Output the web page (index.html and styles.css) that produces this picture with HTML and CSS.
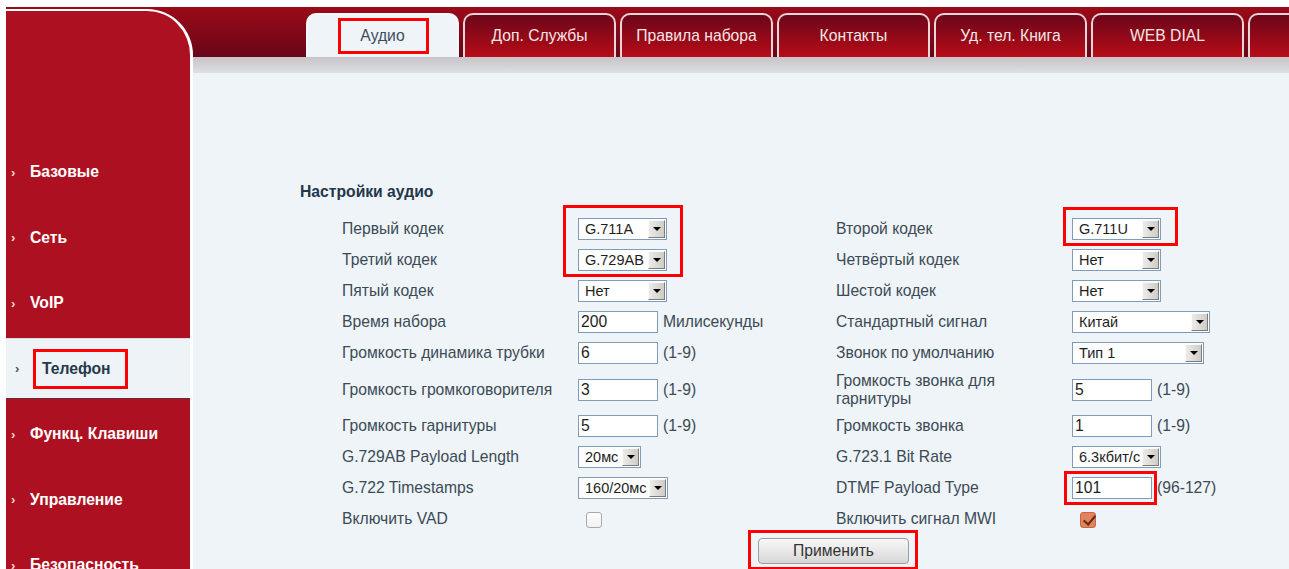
FILE: index.html
```html
<!DOCTYPE html>
<html lang="ru">
<head>
<meta charset="utf-8">
<title>Телефон — Аудио</title>
<link rel="stylesheet" href="styles.css">
</head>
<body>
<div class="app">
  <nav class="side">
    <a class="item"><span class="chev">›</span><span class="txt">Базовые</span></a>
    <a class="item"><span class="chev">›</span><span class="txt">Сеть</span></a>
    <a class="item"><span class="chev">›</span><span class="txt">VoIP</span></a>
    <a class="item active"><span class="chev">›</span><span class="txt">Телефон<span class="mark m-side"></span></span></a>
    <a class="item"><span class="chev">›</span><span class="txt">Функц. Клавиши</span></a>
    <a class="item"><span class="chev">›</span><span class="txt">Управление</span></a>
    <a class="item"><span class="chev">›</span><span class="txt">Безопасность</span></a>
  </nav>

  <main class="main">
    <div class="tabs">
      <a class="tab active"><span class="txt">Аудио<span class="mark m-tab"></span></span></a>
      <a class="tab">Доп. Службы</a>
      <a class="tab">Правила набора</a>
      <a class="tab">Контакты</a>
      <a class="tab">Уд. тел. Книга</a>
      <a class="tab">WEB DIAL</a>
      <a class="tab">Wi-Fi</a>
    </div>
    <div class="strip"></div>

    <section class="content">
      <h2 class="title">Настройки аудио</h2>
      <table class="form">
        <colgroup><col class="c-lbl"><col class="c-ctl"><col class="c-lbl"><col></colgroup>
        <tr>
          <td class="lbl">Первый кодек</td>
          <td><span class="sel w89"><select><option>G.711A</option><option>G.711U</option><option>G.722</option></select><span class="mark m-pair"></span></span></td>
          <td class="lbl">Второй кодек</td>
          <td><span class="sel w89"><select><option>G.711U</option><option>G.711A</option><option>G.722</option></select><span class="mark m-second"></span></span></td>
        </tr>
        <tr>
          <td class="lbl">Третий кодек</td>
          <td><span class="sel w89"><select><option>G.729AB</option><option>G.723.1</option></select></span></td>
          <td class="lbl">Четвёртый кодек</td>
          <td><span class="sel w89"><select><option>Нет</option><option>G.722</option></select></span></td>
        </tr>
        <tr>
          <td class="lbl">Пятый кодек</td>
          <td><span class="sel w89"><select><option>Нет</option><option>G.726-32</option></select></span></td>
          <td class="lbl">Шестой кодек</td>
          <td><span class="sel w89"><select><option>Нет</option><option>iLBC</option></select></span></td>
        </tr>
        <tr>
          <td class="lbl">Время набора</td>
          <td><input class="inp" type="text" value="200"><span class="unit">Милисекунды</span></td>
          <td class="lbl">Стандартный сигнал</td>
          <td><span class="sel w138"><select><option>Китай</option><option>Россия</option></select></span></td>
        </tr>
        <tr>
          <td class="lbl">Громкость динамика трубки</td>
          <td><input class="inp" type="text" value="6"><span class="unit">(1-9)</span></td>
          <td class="lbl">Звонок по умолчанию</td>
          <td><span class="sel w132"><select><option>Тип 1</option><option>Тип 2</option></select></span></td>
        </tr>
        <tr class="tall">
          <td class="lbl">Громкость громкоговорителя</td>
          <td><input class="inp" type="text" value="3"><span class="unit">(1-9)</span></td>
          <td class="lbl wrap">Громкость звонка для гарнитуры</td>
          <td><input class="inp" type="text" value="5"><span class="unit">(1-9)</span></td>
        </tr>
        <tr>
          <td class="lbl">Громкость гарнитуры</td>
          <td><input class="inp" type="text" value="5"><span class="unit">(1-9)</span></td>
          <td class="lbl">Громкость звонка</td>
          <td><input class="inp" type="text" value="1"><span class="unit">(1-9)</span></td>
        </tr>
        <tr>
          <td class="lbl">G.729AB Payload Length</td>
          <td><span class="sel w63"><select><option>20мс</option><option>30мс</option></select></span></td>
          <td class="lbl">G.723.1 Bit Rate</td>
          <td><span class="sel w89"><select><option>6.3кбит/с</option><option>5.3кбит/с</option></select></span></td>
        </tr>
        <tr>
          <td class="lbl">G.722 Timestamps</td>
          <td><span class="sel w90"><select><option>160/20мс</option><option>320/20мс</option></select></span></td>
          <td class="lbl">DTMF Payload Type</td>
          <td><span class="hold"><input class="inp" type="text" value="101"><span class="mark m-dtmf"></span></span><span class="unit">(96-127)</span></td>
        </tr>
        <tr>
          <td class="lbl">Включить VAD</td>
          <td><input class="cb" type="checkbox"></td>
          <td class="lbl">Включить сигнал MWI</td>
          <td><input class="cb" type="checkbox" checked></td>
        </tr>
        <tr class="actions">
          <td colspan="4"><span class="hold"><button class="apply" type="button">Применить</button><span class="mark m-apply"></span></span></td>
        </tr>
      </table>
    </section>
  </main>
</div>
</body>
</html>
```

FILE: styles.css
```css
* { box-sizing: border-box; }

html, body { margin: 0; }

body {
  background: #fff;
  padding: 7px 0 0 6px;
  height: 569px;
  overflow: hidden;
  font-family: "Liberation Sans", Arial, sans-serif;
  font-size: 15.7px;
  color: #3c4a56;
}

a { text-decoration: none; cursor: pointer; }

/* frame: dark red header band across the top, light panel below */
.app {
  display: flex;
  height: 562px;
  background:
    linear-gradient(#9b0a18, #680618) 0 0 / 100% 50px no-repeat,
    #eef4f7;
}

/* ---------- left menu ---------- */
.side {
  width: 187px;
  flex: none;
  margin-top: 2px;
  padding-top: 130.5px;
  display: flex;
  flex-direction: column;
  gap: 4.5px;
  background: #ad1121;
  border-top: 2px solid #fff;
  border-right: 3px solid #fff;
  border-top-right-radius: 46px;
}

.item {
  height: 61px;
  flex: none;
  display: flex;
  align-items: center;
  padding-left: 5px;
  color: #fff;
  font-weight: bold;
}

.item .chev {
  width: 19px;
  font-size: 13px;
  color: #f3dada;
}

.item .txt { position: relative; }

.item.active {
  padding-left: 9px;
  background: #edf3f7;
  color: #27394b;
  border-top: 1px solid #d9dcdf;
  border-bottom: 1px solid #6b2a33;
}

.item.active .chev {
  width: 27px;
  color: #4a5560;
}

/* ---------- tabs ---------- */
.main {
  flex: 1;
  min-width: 0;
  display: flex;
  flex-direction: column;
}

.tabs {
  height: 50px;
  flex: none;
  display: flex;
  gap: 4px;
  padding: 6px 0 0 113px;
  overflow: hidden;
}

.tab {
  width: 153px;
  height: 44px;
  flex: none;
  display: flex;
  align-items: center;
  justify-content: center;
  border: 2px solid #ecd5d8;
  border-bottom: 0;
  border-radius: 10px 10px 0 0;
  background: linear-gradient(#6b0619, #b70c18);
  color: #f6e6e6;
}

.tab.active {
  background: #eef4f7;
  border-color: #f4f7f9;
  color: #3b4d60;
}

.tab .txt { position: relative; }

.strip {
  height: 16px;
  flex: none;
  background: linear-gradient(#c8c3c7, #dde0e2);
}

/* ---------- form ---------- */
.content { padding: 110px 0 0 107px; }

.title {
  margin: 0;
  font-size: 15.7px;
  line-height: 18px;
  font-weight: bold;
  color: #23364a;
}

.form {
  margin: 12.5px 0 0 42px;
  width: 947px;
  table-layout: fixed;
  border-collapse: collapse;
}

.c-lbl { width: 236px; }
.c-ctl { width: 258px; }

.form td {
  height: 31px;
  padding: 0;
  vertical-align: middle;
  line-height: 18px;
  white-space: nowrap;
}

.form td.wrap { white-space: normal; padding-right: 40px; }

.form tr.tall td { height: 42px; }

/* drop-down with a raised arrow button */
.sel {
  position: relative;
  display: inline-block;
  vertical-align: middle;
  height: 22px;
  border: 1px solid #7f9db9;
  background: #fff;
}

.sel select {
  appearance: none;
  -webkit-appearance: none;
  display: block;
  width: 100%;
  height: 20px;
  border: 0;
  outline: none;
  background: transparent;
  padding: 0 0 0 6px;
  font-family: "Liberation Sans", Arial, sans-serif;
  font-size: 14.5px;
  color: #1e1e1e;
}

.sel::after {
  content: "";
  position: absolute;
  top: 1px;
  right: 1px;
  bottom: 1px;
  width: 15px;
  background: linear-gradient(90deg, #ecebe8, #cfccc6);
  border-top: 1px solid #fafafa;
  border-left: 1px solid #fafafa;
  border-right: 1px solid #7c7c7c;
  border-bottom: 1px solid #7c7c7c;
  pointer-events: none;
}

.sel::before {
  content: "";
  position: absolute;
  z-index: 1;
  right: 5px;
  top: 8px;
  border-left: 4px solid transparent;
  border-right: 4px solid transparent;
  border-top: 4px solid #000;
  pointer-events: none;
}

.w63 { width: 63px; }
.w89 { width: 89px; }
.w90 { width: 90px; }
.w132 { width: 132px; }
.w138 { width: 138px; }

.inp {
  width: 80px;
  height: 22px;
  vertical-align: middle;
  border: 1px solid #7f9db9;
  padding: 0 2px;
  font-family: "Liberation Sans", Arial, sans-serif;
  font-size: 15.7px;
  color: #1e1e1e;
  outline: none;
}

.unit {
  margin-left: 5px;
  vertical-align: middle;
}

.cb {
  appearance: none;
  -webkit-appearance: none;
  position: relative;
  width: 16px;
  height: 16px;
  margin: 0 0 0 8px;
  vertical-align: middle;
  border: 1px solid #a9a9a9;
  border-radius: 3px;
  background: linear-gradient(#fdfdfd, #f1f1f1);
}

.cb:checked {
  background: #e4825a;
  border-color: #c26844;
}

.cb:checked::after {
  content: "";
  position: absolute;
  left: 5px;
  top: 0;
  width: 5px;
  height: 10px;
  border-right: 2px solid #5b2a1c;
  border-bottom: 2px solid #5b2a1c;
  transform: rotate(40deg);
}

.actions td {
  padding: 3.5px 0 0 416px;
  vertical-align: top;
}

.apply {
  width: 151px;
  height: 26px;
  border: 1px solid #9d9d9d;
  border-radius: 4px;
  background: linear-gradient(#f8f8f8, #d7d7d7);
  font-family: "Liberation Sans", Arial, sans-serif;
  font-size: 15.7px;
  color: #333;
  display: block;
}

.hold {
  position: relative;
  display: inline-block;
  vertical-align: middle;
}

/* red call-out frames drawn over the controls */
.mark {
  position: absolute;
  border: 3px solid #f00;
  pointer-events: none;
}

.m-pair   { left: -16px; top: -14px; width: 120px; height: 72px; }
.m-second { left: -10px; top: -12px; width: 115px; height: 39px; }
.m-dtmf   { left: -8px;  top: -6px;  width: 93px;  height: 34px; }
.m-apply  { left: -10px; top: -8px;  width: 170px; height: 40px; }
.m-side   { left: -9px;  top: -11px; width: 95px;  height: 40px; }
.m-tab    { left: -22px; top: -9px;  width: 91px;  height: 36px; }
```
